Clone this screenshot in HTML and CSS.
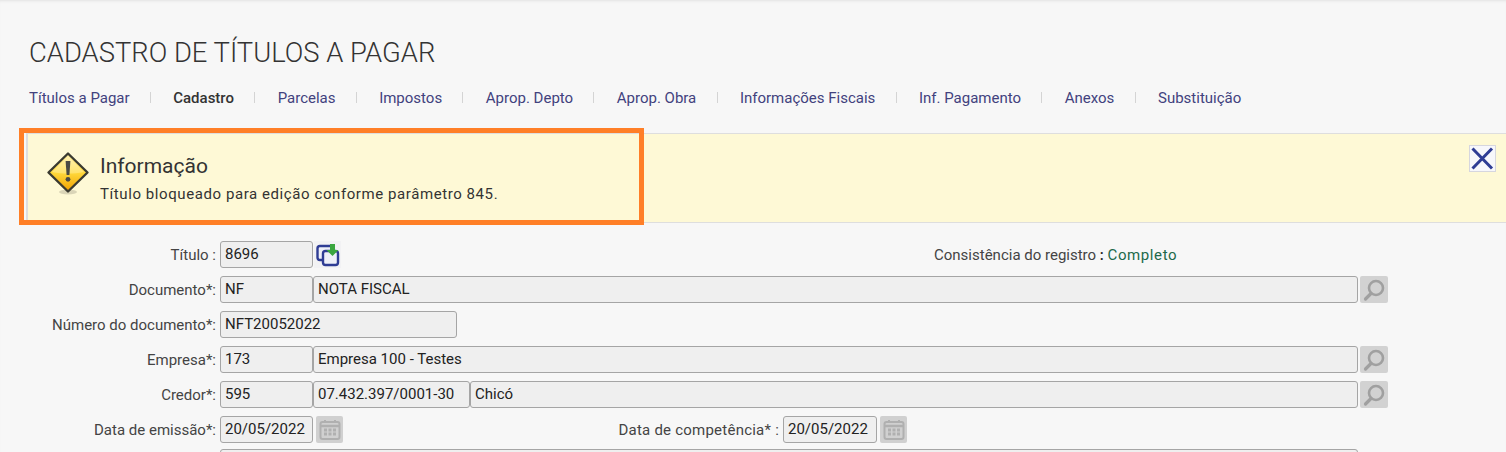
FILE: index.html
```html
<!DOCTYPE html>
<html lang="pt-BR">
<head>
<meta charset="utf-8">
<title>Cadastro de Títulos a Pagar</title>
<link rel="stylesheet" href="styles.css">
</head>
<body>
<div class="page">
  <h1 class="title">CADASTRO DE TÍTULOS A PAGAR</h1>
  <nav class="tabs">
    <a class="tab">Títulos a Pagar</a>
    <a class="tab active">Cadastro</a>
    <a class="tab">Parcelas</a>
    <a class="tab">Impostos</a>
    <a class="tab">Aprop. Depto</a>
    <a class="tab">Aprop. Obra</a>
    <a class="tab">Informações Fiscais</a>
    <a class="tab">Inf. Pagamento</a>
    <a class="tab">Anexos</a>
    <a class="tab">Substituição</a>
  </nav>
  <section class="banner">
    <div class="highlight"></div>
    <svg class="warn" width="44" height="44" viewBox="0 0 44 44">
      <defs>
        <linearGradient id="wg" x1="0" y1="0" x2="0" y2="1">
          <stop offset="0" stop-color="#fff2b0"/>
          <stop offset="0.5" stop-color="#ffd93c"/>
          <stop offset="1" stop-color="#f0a000"/>
        </linearGradient>
      </defs>
      <ellipse cx="22" cy="41" rx="9" ry="2.5" fill="#000" opacity="0.14"/>
      <path d="M22 2.5 41.5 21.5 22 40.5 2.5 21.5Z" fill="url(#wg)" stroke="#3a3a30" stroke-width="2.4" stroke-linejoin="round"/>
      <path d="M22 5.5 38 21c-6 1.5-10 1.5-16 1.5S12 22 6 21Z" fill="#fffbe6" opacity="0.3"/>
      <path d="M19.6 10h4.8l-1 14h-2.8Z" fill="#4a4a44"/>
      <circle cx="22" cy="28.3" r="2.4" fill="#4a4a44"/>
    </svg>
    <div class="msg">
      <div class="msg-title">Informação</div>
      <div class="msg-text">Título bloqueado para edição conforme parâmetro 845.</div>
    </div>
    <div class="close">
      <svg width="25" height="25" viewBox="0 0 25 25"><path d="M2.5 2.5 22 22.5M22 2.5 2.5 22.5" stroke="#2f3d94" stroke-width="3" fill="none"/></svg>
    </div>
  </section>
  <form class="form">
    <div class="row">
      <span class="label">Título :</span>
      <div class="field w-code">8696</div>
      <span class="copy">
        <svg width="26" height="26" viewBox="0 0 26 26">
          <rect x="2.5" y="4" width="15" height="14" rx="2.5" fill="#eef0f8" stroke="#2f3d94" stroke-width="2.4"/>
          <rect x="8" y="9" width="15" height="14" rx="2.5" fill="#eef0f8" stroke="#2f3d94" stroke-width="2.4"/>
          <path d="M15 2h5v6h3.5l-6 6-6-6H15Z" fill="#3aa63f"/>
        </svg>
      </span>
      <span class="status">Consistência do registro <b class="colon">:</b> <span class="ok">Completo</span></span>
    </div>
    <div class="row">
      <span class="label">Documento*:</span>
      <div class="field w-code">NF</div>
      <div class="field w-long">NOTA FISCAL</div>
      <span class="btn">
        <svg width="24" height="24" viewBox="0 0 24 24"><circle cx="14" cy="10" r="7" fill="none" stroke="#a0a0a0" stroke-width="2.6"/><path d="M9 15.5 3.5 21" stroke="#a0a0a0" stroke-width="3.2" stroke-linecap="round"/></svg>
      </span>
    </div>
    <div class="row">
      <span class="label">Número do documento*:</span>
      <div class="field w-num">NFT20052022</div>
    </div>
    <div class="row">
      <span class="label">Empresa*:</span>
      <div class="field w-code">173</div>
      <div class="field w-long">Empresa 100 - Testes</div>
      <span class="btn">
        <svg width="24" height="24" viewBox="0 0 24 24"><circle cx="14" cy="10" r="7" fill="none" stroke="#a0a0a0" stroke-width="2.6"/><path d="M9 15.5 3.5 21" stroke="#a0a0a0" stroke-width="3.2" stroke-linecap="round"/></svg>
      </span>
    </div>
    <div class="row">
      <span class="label">Credor*:</span>
      <div class="field w-code">595</div>
      <div class="field w-cnpj">07.432.397/0001-30</div>
      <div class="field w-name">Chicó</div>
      <span class="btn">
        <svg width="24" height="24" viewBox="0 0 24 24"><circle cx="14" cy="10" r="7" fill="none" stroke="#a0a0a0" stroke-width="2.6"/><path d="M9 15.5 3.5 21" stroke="#a0a0a0" stroke-width="3.2" stroke-linecap="round"/></svg>
      </span>
    </div>
    <div class="row row-dates">
      <span class="label">Data de emissão*:</span>
      <div class="field w-code">20/05/2022</div>
      <span class="btn cal">
        <svg width="22" height="22" viewBox="0 0 22 22"><rect x="1.5" y="3" width="19" height="17" rx="2" fill="none" stroke="#b0b0b0" stroke-width="2"/><path d="M1.5 7h19" stroke="#b0b0b0" stroke-width="2.5"/><path d="M6 1v3M16 1v3" stroke="#b0b0b0" stroke-width="2"/><path d="M5 11h12M5 15h12" stroke="#b0b0b0" stroke-width="3" stroke-dasharray="3 1.5"/></svg>
      </span>
      <span class="label-2">Data de competência* :</span>
      <div class="field w-date">20/05/2022</div>
      <span class="btn cal">
        <svg width="22" height="22" viewBox="0 0 22 22"><rect x="1.5" y="3" width="19" height="17" rx="2" fill="none" stroke="#b0b0b0" stroke-width="2"/><path d="M1.5 7h19" stroke="#b0b0b0" stroke-width="2.5"/><path d="M6 1v3M16 1v3" stroke="#b0b0b0" stroke-width="2"/><path d="M5 11h12M5 15h12" stroke="#b0b0b0" stroke-width="3" stroke-dasharray="3 1.5"/></svg>
      </span>
    </div>
    <div class="row">
      <span class="label"></span>
      <div class="field w-full"></div>
    </div>
  </form>
</div>
</body>
</html>
```
FILE: styles.css
```css
* { box-sizing: border-box; }
html, body { margin: 0; height: 452px; overflow: hidden; }
body { background: #f7f7f7; font-family: Roboto, sans-serif; color: #3b3b3b; }
.page { height: 452px; overflow: hidden; box-shadow: inset 0 3px 3px -2px #e2e2e2; }
.title { margin: 0; padding: 38px 0 0 29px; font-size: 27.4px; line-height: 30px; font-weight: 300; color: #333; }
.tabs { display: flex; margin-top: 22px; padding-left: 29px; height: 16px; align-items: center; font-size: 15px; }
.tab { color: #42427e; padding-right: 21.3px; margin-right: 22.35px; position: relative; line-height: 16px; }
.tab::after { content: ""; position: absolute; right: 0; top: 2px; width: 1px; height: 11px; background: #d4d4d4; }
.tab:last-child::after { display: none; }
.tab.active { color: #333; font-weight: 500; }
.banner { position: relative; display: flex; margin: 27px 0 0 26px; height: 90px; background: #fef9d6; border: 1px solid #dedede; border-left-width: 2px; border-right: 0; padding: 17px 0 0 18px; }
.highlight { position: absolute; left: -9px; top: -6px; width: 625px; height: 97px; border: 5px solid #ff7f27; }
.warn { margin: 0 9px 0 0; }
.msg { padding-top: 3px; margin-left: 1px; }
.msg-title { font-size: 21px; line-height: 24px; color: #333; }
.msg-text { font-size: 15px; line-height: 20px; margin-top: 6px; color: #333; letter-spacing: 0.58px; }
.close { position: absolute; right: 10px; top: 11px; width: 27px; height: 27px; background: #f7f7fb; border: 1px solid #d6d6de; display: flex; align-items: center; justify-content: center; }
.form { padding-top: 18px; }
.row { display: flex; align-items: center; height: 27px; margin-bottom: 8px; font-size: 15px; }
.row-dates { margin-bottom: 6px; }
.label { width: 216px; text-align: right; margin-right: 4px; color: #444; }
.label-2 { width: 436px; text-align: right; margin-right: 4px; color: #444; letter-spacing: 0.23px; }
.field { height: 27px; background: #efefef; border: 1px solid #a5a5a5; border-radius: 3px; padding: 0 4px; line-height: 24px; color: #222; white-space: nowrap; }
.w-code { width: 93px; }
.w-long { width: 1045px; }
.w-num { width: 237px; }
.w-cnpj { width: 157px; }
.w-name { width: 888px; }
.w-date { width: 94px; }
.w-full { width: 1138px; }
.copy { width: 27px; height: 27px; margin-left: 1px; background: #f2f2f4; display: flex; align-items: center; justify-content: center; }
.status { margin-left: 593px; color: #444; }
.colon { font-weight: 500; color: #222; }
.ok { color: #21694a; letter-spacing: 0.6px; }
.btn { width: 28px; height: 27px; margin-left: 2px; background: #d2d2d2; border-radius: 2px; display: flex; align-items: center; justify-content: center; }
.btn.cal { width: 27px; margin-left: 3px; background: #d0d0d0; }
```
